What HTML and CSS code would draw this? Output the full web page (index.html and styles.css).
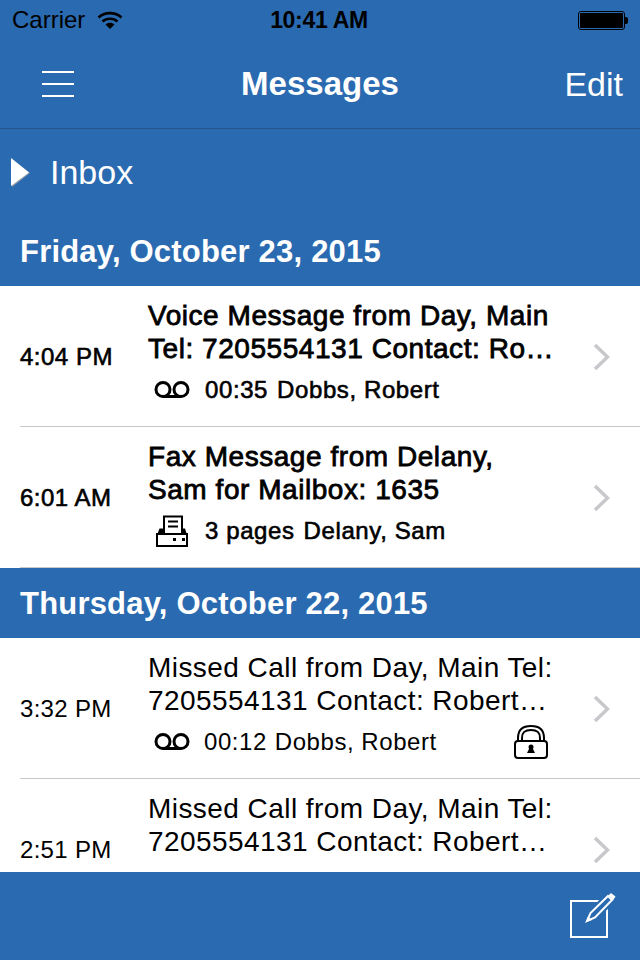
FILE: index.html
```html
<!DOCTYPE html>
<html lang="en">
<head>
    <meta charset="UTF-8">
    <meta name="viewport" content="width=device-width, initial-scale=1.0">
    <title>Messages</title>
    <link rel="stylesheet" href="styles.css">
</head>
<body>
    <div class="page">
        <div class="status-bar">
            <div class="status-left">
                <span class="carrier">Carrier</span>
                <svg class="wifi" width="26" height="20" viewBox="0 0 26 20"><path d="M1.500 7.500C7.500 1.600 18.500 1.600 24.500 7.500" fill="none" stroke="#000" stroke-width="2.600"/><path d="M5.500 11.500C9.500 7.800 16.500 7.800 20.500 11.500" fill="none" stroke="#000" stroke-width="2.600"/><path d="M8.500 14.500C11 12.300 15 12.300 17.500 14.500L13 19Z" fill="#000"/></svg>
            </div>
            <div class="clock">10:41 AM</div>
            <div class="status-right">
                <div class="battery"><div class="battery-fill"></div></div>
                <div class="battery-tip"></div>
            </div>
        </div>

        <div class="nav-bar">
            <div class="menu-btn"><span></span><span></span><span></span></div>
            <div class="nav-title">Messages</div>
            <div class="nav-edit">Edit</div>
        </div>

        <div class="folder-row">
            <svg class="folder-arrow" width="20" height="30" viewBox="0 0 20 30"><path d="M1 1L19 15L1 29Z" fill="#8e9aa8"/><path d="M0 0L18 14.500L0 28Z" fill="#fff"/></svg>
            <span>Inbox</span>
        </div>

        <div class="list">
            <div class="day-header">Friday, October 23, 2015</div>

            <div class="row">
                <div class="time bold">4:04 PM</div>
                <div class="body bold">
                    <div class="line">Voice Message from Day, Main</div>
                    <div class="line">Tel: 7205554131 Contact: Ro…</div>
                    <div class="meta">
                        <div class="meta-icon">
                            <svg width="36" height="18" viewBox="0 0 36 18"><circle cx="9" cy="8.500" r="7" fill="none" stroke="#000" stroke-width="3"/><circle cx="27" cy="8.500" r="7" fill="none" stroke="#000" stroke-width="3"/><path d="M9 15.500H27" stroke="#000" stroke-width="3"/></svg>
                        </div>
                        <span>00:35</span><span>Dobbs, Robert</span>
                    </div>
                </div>
                <svg class="chevron" width="18" height="28" viewBox="0 0 18 28"><path d="M2 2L14.500 14L2 26" fill="none" stroke="#c7c7cc" stroke-width="3.400"/></svg>
            </div>

            <div class="row">
                <div class="time bold">6:01 AM</div>
                <div class="body bold">
                    <div class="line">Fax Message from Delany,</div>
                    <div class="line">Sam for Mailbox: 1635</div>
                    <div class="meta">
                        <div class="meta-icon">
                            <svg width="32" height="32" viewBox="0 0 32 32"><path d="M8 18V1.500H26V18" fill="none" stroke="#000" stroke-width="2"/><path d="M12 6.500H22M12 11.500H22" fill="none" stroke="#000" stroke-width="2"/><path d="M1 20L3.500 13.500H8V18H26V13.500H29L31 20Z" fill="#000"/><rect x="1" y="19" width="30" height="12" fill="none" stroke="#000" stroke-width="2"/><path d="M17 23h3v3h-3zM26 23h3v3h-3z" fill="#000"/></svg>
                        </div>
                        <span>3 pages</span><span>Delany, Sam</span>
                    </div>
                </div>
                <svg class="chevron" width="18" height="28" viewBox="0 0 18 28"><path d="M2 2L14.500 14L2 26" fill="none" stroke="#c7c7cc" stroke-width="3.400"/></svg>
            </div>

            <div class="day-header">Thursday, October 22, 2015</div>

            <div class="row">
                <div class="time">3:32 PM</div>
                <div class="body">
                    <div class="line">Missed Call from Day, Main Tel:</div>
                    <div class="line">7205554131 Contact: Robert…</div>
                    <div class="meta">
                        <div class="meta-icon">
                            <svg width="36" height="18" viewBox="0 0 36 18"><circle cx="9" cy="8.500" r="7" fill="none" stroke="#000" stroke-width="3"/><circle cx="27" cy="8.500" r="7" fill="none" stroke="#000" stroke-width="3"/><path d="M9 15.500H27" stroke="#000" stroke-width="3"/></svg>
                        </div>
                        <span>00:12</span><span>Dobbs, Robert</span>
                        <svg class="lock" width="34" height="34" viewBox="0 0 34 34"><path d="M4 16V13C4 5 9 1 17 1S30 5 30 13V16" fill="none" stroke="#000" stroke-width="2"/><path d="M8 16V13C8 7 11 5 17 5S26 7 26 13V16" fill="none" stroke="#000" stroke-width="2"/><rect x="1" y="16" width="32" height="17" rx="3" fill="none" stroke="#000" stroke-width="2"/><circle cx="17" cy="22" r="2.500" fill="#000"/><path d="M15.500 23H18.500L21 28H13Z" fill="#000"/></svg>
                    </div>
                </div>
                <svg class="chevron" width="18" height="28" viewBox="0 0 18 28"><path d="M2 2L14.500 14L2 26" fill="none" stroke="#c7c7cc" stroke-width="3.400"/></svg>
            </div>

            <div class="row">
                <div class="time">2:51 PM</div>
                <div class="body">
                    <div class="line">Missed Call from Day, Main Tel:</div>
                    <div class="line">7205554131 Contact: Robert…</div>
                    <div class="meta">
                        <div class="meta-icon"></div>
                    </div>
                </div>
                <svg class="chevron" width="18" height="28" viewBox="0 0 18 28"><path d="M2 2L14.500 14L2 26" fill="none" stroke="#c7c7cc" stroke-width="3.400"/></svg>
            </div>
        </div>

        <div class="tool-bar">
            <svg width="46" height="46" viewBox="0 0 46 46"><rect x="1" y="9" width="36" height="36" fill="none" stroke="#fff" stroke-width="2"/><path d="M16 30L20 20L39 1L45 7L26 26Z" fill="#2a6ab0" stroke="#2a6ab0" stroke-width="4"/><path d="M17 29L20.500 21L38 4L42 8L25 25.500Z" fill="none" stroke="#fff" stroke-width="2"/><path d="M16 30L18 24.500L22 28Z" fill="#fff"/><path d="M38.500 3.500L41 1L45.500 4.500L43 8.500Z" fill="#fff"/></svg>
        </div>
    </div>
</body>
</html>
```

FILE: styles.css
```css
html, body {
    margin: 0;
    padding: 0;
}
body {
    font-family: "Liberation Sans", Arial, sans-serif;
    color: #000;
    background-color: #fff;
}
.page {
    width: 640px;
    height: 960px;
    display: flex;
    flex-direction: column;
    overflow: hidden;
}
.status-bar {
    height: 40px;
    background-color: #2a6ab0;
    display: flex;
    align-items: center;
    justify-content: space-between;
    padding: 0 12px;
    font-size: 24px;
}
.status-left {
    width: 200px;
    display: flex;
    align-items: center;
    gap: 12px;
}
.wifi {
    display: block;
}
.clock {
    font-size: 23px;
    font-weight: bold;
    letter-spacing: -0.3px;
    padding: 1px 2px 0 0;
}
.status-right {
    width: 200px;
    display: flex;
    align-items: center;
    justify-content: flex-end;
}
.battery {
    width: 43px;
    height: 15px;
    border: 1px solid #000;
    border-radius: 3px;
    padding: 1px;
}
.battery-fill {
    height: 100%;
    background-color: #000;
    border-radius: 1px;
}
.battery-tip {
    width: 3px;
    height: 7px;
    background-color: #000;
    border-radius: 0 2px 2px 0;
}
.nav-bar {
    height: 88px;
    background-color: #2a6ab0;
    border-bottom: 1px solid #24558c;
    display: grid;
    grid-template-columns: 1fr auto 1fr;
    align-items: center;
    color: #fff;
    padding: 0 17px 0 42px;
}
.menu-btn {
    width: 32px;
    display: flex;
    flex-direction: column;
    gap: 10px;
}
.menu-btn span {
    height: 2px;
    background-color: #fff;
}
.nav-title {
    font-size: 33px;
    font-weight: bold;
    margin-left: -25px;
}
.nav-edit {
    font-size: 34px;
    justify-self: end;
}
.folder-row {
    height: 87px;
    background-color: #2a6ab0;
    color: #fff;
    display: flex;
    align-items: center;
    gap: 19px;
    padding-left: 11px;
    font-size: 34px;
}
.list {
    flex: 1;
    overflow: hidden;
}
.day-header {
    height: 70px;
    box-sizing: border-box;
    padding: 2px 0 0 20px;
    background-color: #2a6ab0;
    color: #fff;
    font-size: 31px;
    font-weight: bold;
    letter-spacing: 0.2px;
    display: flex;
    align-items: center;
}
.row {
    height: 141px;
    box-sizing: border-box;
    margin-left: 20px;
    padding: 2px 29px 0 0;
    border-bottom: 1px solid #c8c7cc;
    display: flex;
    align-items: center;
}
.time {
    width: 128px;
    font-size: 24px;
    letter-spacing: 0.3px;
    flex-shrink: 0;
}
.body {
    flex: 1;
    min-width: 0;
    padding-bottom: 9px;
}
.line {
    font-size: 28px;
    line-height: 33px;
    letter-spacing: 0.44px;
    white-space: nowrap;
}
.meta {
    display: flex;
    align-items: center;
    height: 34px;
    margin-top: 8px;
    gap: 8px;
    font-size: 24px;
    letter-spacing: 0.55px;
}
.meta-icon {
    width: 48px;
    display: flex;
    justify-content: center;
}
.bold .line {
    letter-spacing: 0.55px;
    -webkit-text-stroke: 0.8px #000;
}
.bold .meta {
    letter-spacing: 0.6px;
    gap: 9px;
    -webkit-text-stroke: 0.6px #000;
}
.time.bold {
    letter-spacing: 0.5px;
    -webkit-text-stroke: 0.6px #000;
}
.lock {
    margin-left: auto;
    margin-right: 45px;
}
.chevron {
    flex-shrink: 0;
}
.tool-bar {
    height: 88px;
    box-sizing: border-box;
    padding: 0 24px 2px 0;
    background-color: #2a6ab0;
    display: flex;
    align-items: center;
    justify-content: flex-end;
}
```
